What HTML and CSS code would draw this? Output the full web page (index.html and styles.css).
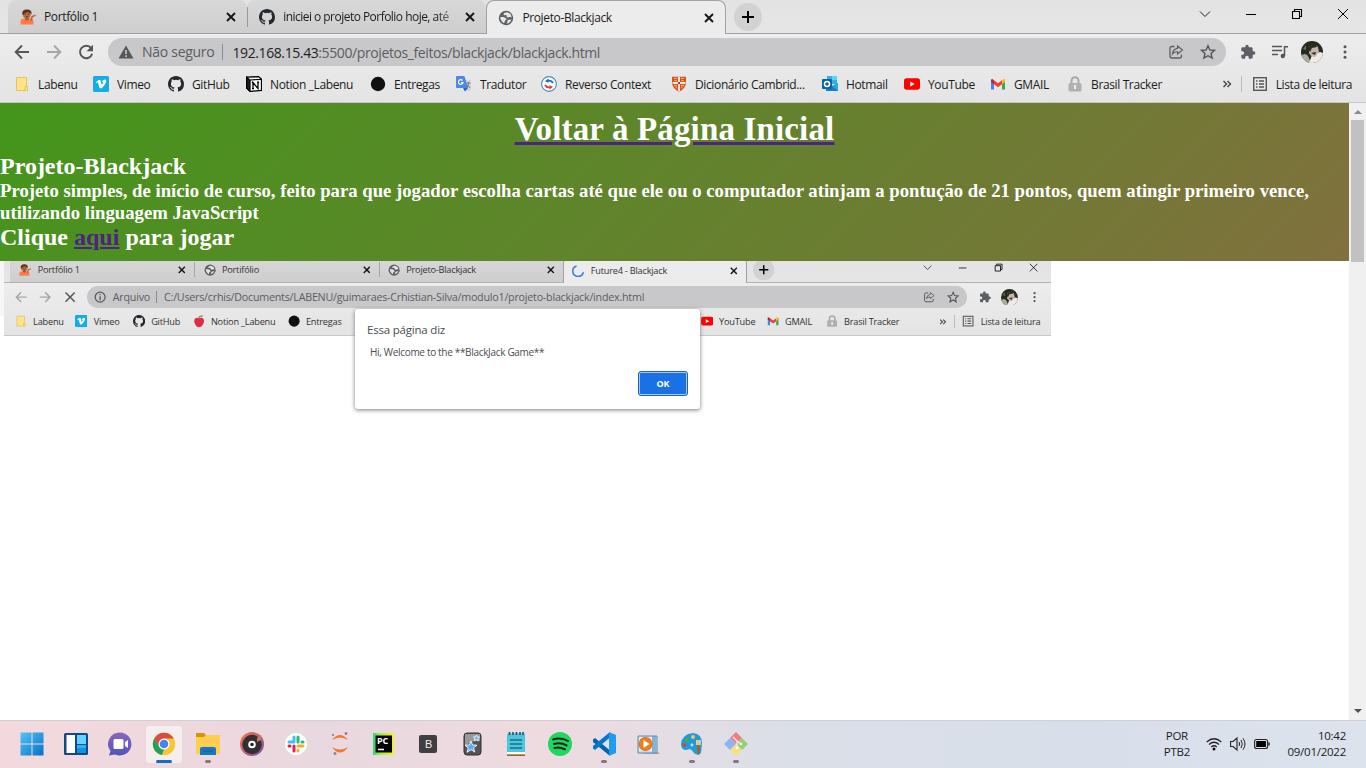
FILE: index.html
```html
<!DOCTYPE html>
<html lang="pt-BR">
<head>
<meta charset="utf-8">
<title>Projeto-Blackjack</title>
<link rel="stylesheet" href="styles.css">
</head>
<body>
<svg class="defs" width="0" height="0">
  <symbol id="person" viewBox="0 0 16 16"><path d="M.5 15.500v-3q0-3 4-3h5q4 0 4 3v3z" fill="#ff7c4a"/><path d="M10 11l1.500-4 4-1.500.3 1.200-3 1.500-1 4z" fill="#b9683c"/><path d="M5 8h4v2.500q-2 2-4 0z" fill="#a65c35"/><circle cx="6.800" cy="5.400" r="3.900" fill="#b96a40"/><path d="M2.300 5.500Q1.500 .5 7 .4q5.200.1 4.500 5Q10 4 8 3 5 3 3.200 6z" fill="#56331f"/><path d="M5 5.300h1M8 5.300h1M6 7.800h2" stroke="#412319" stroke-width=".8"/></symbol>
  <symbol id="github" viewBox="0 0 16 16"><path fill="#24292f" d="M8 0C3.580 0 0 3.580 0 8c0 3.540 2.290 6.530 5.470 7.590.4.070.55-.17.55-.38 0-.19-.010-.82-.010-1.490-2.010.37-2.530-.49-2.690-.94-.09-.23-.48-.94-.82-1.130-.28-.15-.68-.52-.010-.53.63-.010 1.080.58 1.230.82.72 1.210 1.870.87 2.330.66.070-.52.28-.87.510-1.070-1.780-.2-3.640-.89-3.640-3.950 0-.87.31-1.590.82-2.150-.08-.2-.36-1.020.08-2.120 0 0 .67-.21 2.200.82a7.500 7.500 0 0 1 4 0c1.530-1.040 2.200-.82 2.200-.82.44 1.100.16 1.920.08 2.120.51.56.82 1.270.82 2.150 0 3.070-1.870 3.750-3.650 3.950.29.25.54.73.54 1.480 0 1.070-.010 1.930-.010 2.200 0 .21.150.46.55.38A8 8 0 0 0 16 8c0-4.420-3.580-8-8-8z"/></symbol>
  <symbol id="globe" viewBox="0 0 16 16"><circle cx="8" cy="8" r="7.200" fill="#5c6063"/><path d="M8.500 2.300q-3.500.7-3 2.200.5 1 2 .5 1.500 0 1 1.500 1 1.500 3 .5 1.500-.5 2 1 .3-5-5-5.700zM2.300 7h3.500l2.500 1.500q1 1.500-1 1.800L6 13.300Q2.300 11 2.300 7zM8.500 13.500q4-.3 5-4l-2.500.3q-2 .5-1.500 1.700z" fill="#e5e5e5"/></symbol>
  <symbol id="close" viewBox="0 0 10 10"><path d="M1 1l8 8M9 1L1 9" stroke="#161616" stroke-width="1.900" fill="none"/></symbol>
  <symbol id="plus" viewBox="0 0 28 28"><circle cx="14" cy="14" r="14" fill="#d2d2d2"/><path d="M14 8v12M8 14h12" stroke="#000" stroke-width="2"/></symbol>
  <symbol id="win-min" viewBox="0 0 12 12"><path d="M1 6.500h10" stroke="#000" fill="none"/></symbol>
  <symbol id="win-chev" viewBox="0 0 12 12"><path d="M1 3.500l5 5 5-5" stroke="#222" fill="none"/></symbol>
  <symbol id="win-max" viewBox="0 0 12 12"><path d="M1.500 3.500h7v7h-7zM3.500 3V1.500h7v7H9" stroke="#000" stroke-width="1.100" fill="none"/></symbol>
  <symbol id="win-x" viewBox="0 0 12 12"><path d="M1 1l10 10M11 1L1 11" stroke="#000" fill="none"/></symbol>
  <symbol id="back" viewBox="0 0 16 16"><path d="M15 8H2M8 1.500L1.700 8 8 14.500" stroke="currentColor" stroke-width="1.900" fill="none"/></symbol>
  <symbol id="reload" viewBox="0 0 16 16"><path d="M13.200 4.200A6.200 6.200 0 1 0 14.200 9.800" stroke="#54575a" stroke-width="2" fill="none"/><path d="M15 .8v6.500H8.500z" fill="#54575a"/></symbol>
  <symbol id="stop" viewBox="0 0 16 16"><path d="M2 2l12 12M14 2L2 14" stroke="#54575a" stroke-width="2"/></symbol>
  <symbol id="warn" viewBox="0 0 16 16"><path d="M8 1.500L15.500 14.500H.5z" fill="#54575a"/><path d="M8 6v4M8 11.300v1.700" stroke="#c9c9cb" stroke-width="1.600"/></symbol>
  <symbol id="info" viewBox="0 0 16 16"><circle cx="8" cy="8" r="6.500" stroke="#54575a" stroke-width="1.600" fill="none"/><path d="M8 4v1.600M8 7v5" stroke="#54575a" stroke-width="1.600"/></symbol>
  <symbol id="share" viewBox="0 0 16 16"><path d="M6.500 2.500H4Q2 2.500 2 4.500v7.500q0 2 2 2h7.500q2 0 2-2v-1.500" stroke="#5b5e61" stroke-width="1.300" fill="none"/><path d="M9.500 2l5 4-5 4V7.800Q6.500 7.500 4.500 10 5 5 9.500 4.400z" stroke="#5b5e61" stroke-width="1.200" fill="none"/></symbol>
  <symbol id="star" viewBox="0 0 16 16"><path d="M8 1.700l1.900 4.300 4.700.4-3.600 3.100 1.100 4.600L8 11.700l-4.100 2.400L5 9.500 1.400 6.400 6.100 6z" stroke="#54575a" stroke-width="1.400" fill="none"/></symbol>
  <symbol id="puzzle" viewBox="0 0 24 24"><path fill="#5c5f63" d="M20.500 11H19V7c0-1.100-.9-2-2-2h-4V3.500a2.500 2.500 0 0 0-5 0V5H4c-1.100 0-2 .9-2 2v3.800h1.500c1.500 0 2.700 1.200 2.700 2.700S5 16.200 3.500 16.200H2V20c0 1.100.9 2 2 2h3.800v-1.500c0-1.500 1.200-2.700 2.700-2.700s2.700 1.200 2.700 2.700V22H17c1.100 0 2-.9 2-2v-4h1.500a2.500 2.500 0 0 0 0-5z"/></symbol>
  <symbol id="playlist" viewBox="0 0 16 16"><path d="M0 2.500h10M0 6.500h10M0 10.500h6M12.500 12V2.800H16" stroke="#54575a" stroke-width="1.500" fill="none"/><circle cx="10.800" cy="12" r="2.200" fill="#54575a"/></symbol>
  <symbol id="avatar" viewBox="0 0 22 22"><defs><clipPath id="face"><circle cx="11" cy="11" r="11"/></clipPath></defs><g clip-path="url(#face)"><path d="M0 0h22v22H0z" fill="#252b20"/><path d="M0 15q4-4 7 0l3 7H0z" fill="#aaaa9d"/><path d="M8 22l3-8 8-3 3 1v10z" fill="#f0e9e8"/><path d="M8 6q5-4 9 0l1 5-4 5q-4 0-6-4z" fill="#c4b5a8"/><path d="M7 8q2-5 8-4l1 2-5 1-2 4zM10 12l5-1-1 3z" fill="#302a25"/><path d="M2 8l3-4v5z" fill="#66715d"/></g></symbol>
  <symbol id="dots" viewBox="0 0 4 16"><g fill="#54575a"><circle cx="2" cy="2.800" r="1.500"/><circle cx="2" cy="8" r="1.500"/><circle cx="2" cy="13.200" r="1.500"/></g></symbol>
  <symbol id="folder" viewBox="0 0 16 16"><path d="M2.500 1.500h10v9h1v4h-11z" fill="#ffe28a" stroke="#e4c45a"/><path d="M11 14v-3.500h2" stroke="#e4c45a" fill="none"/></symbol>
  <symbol id="vimeo" viewBox="0 0 16 16"><rect width="16" height="16" rx="1.500" fill="#13aeea"/><path d="M3 6l3-2.300Q7.500 3.500 8 6l.8 3q1.500-1.500 1.200-2.700-.2-.8-1.200-.3Q9.700 3.400 12 3.500q1.800.2 1 2.700-.8 2.500-4 5.800-2 1.300-2.800-1L5 6.600 3.600 7z" fill="#fff"/></symbol>
  <symbol id="notion" viewBox="0 0 16 16"><path d="M.7 1.200L12.500.6l3 2.500v11.400L4 15.400.7 12z" fill="#fff" stroke="#000" stroke-width="1.300"/><path d="M.7 1.200L4 4.300v11L.7 12zM4 4l11-.7" fill="#222" stroke="#000" stroke-width="1.200"/><path d="M7 12.500v-6l5 6v-6.200M5.800 6.500H7M6 12.700h2M11 6.200h2" stroke="#000" stroke-width="1.300" fill="none"/></symbol>
  <symbol id="apple" viewBox="0 0 16 16"><path d="M8 4.500Q11 2.500 13.500 5q2 3-.5 7.500Q10 17 8 15.500 5.500 17 3 12.500.5 8 2.500 5 5 2.500 8 4.500z" fill="#e02d43"/><path d="M7.500 5Q8 2 9 1" stroke="#75412d" fill="none"/><path d="M9 3q0-3 4-2.500Q12 3.500 9 3z" fill="#6a9e38"/></symbol>
  <symbol id="dot" viewBox="0 0 16 16"><circle cx="8" cy="8" r="7.200" fill="#111"/></symbol>
  <symbol id="translate" viewBox="0 0 16 16"><path d="M5 4h9q1 0 1 1v9q0 1-1 1H9z" fill="#d3d5d8"/><path d="M1 0h6.500q1 0 1.300 1L12 12H1q-1 0-1-1V1q0-1 1-1z" fill="#4c87ec"/><path d="M7 12h5l-3 3.500z" fill="#2c61c4"/><path d="M6.500 4.500a2.300 2.300 0 1 0 .5 2H5" stroke="#fff" stroke-width="1.200" fill="none"/><path d="M10.500 7h4M12.500 6v1q0 3-2 5M11 8.500l3 3.500" stroke="#6b7d8c" fill="none"/></symbol>
  <symbol id="reverso" viewBox="0 0 16 16"><circle cx="8" cy="8" r="7.400" fill="#fff" stroke="#488cba" stroke-width="1.100"/><path d="M12 7Q10.500 4.200 7 4.700" stroke="#0b72b5" stroke-width="1.800" fill="none"/><path d="M4 5.200L7.500 2.500v4.300z" fill="#0b72b5"/><path d="M4 9Q5.500 11.800 9 11.300" stroke="#e8373b" stroke-width="1.800" fill="none"/><path d="M12 10.800L8.500 9.200v4.300z" fill="#e8373b"/></symbol>
  <symbol id="shield" viewBox="0 0 16 16"><path d="M1 .8h14v7Q14 13 8 15.800 2 13 1 7.800z" fill="#d0552c"/><path d="M8 1v14.200M1.500 7h13" stroke="#f5e6dc" stroke-width="1.900"/><path d="M3 2.500h3M10 2.500h3M3 4.800h3M10 4.800h3M3 9.600h3M10 9.600h3M4.500 11.800H6M10 11.800h1.500" stroke="#f1b44c" stroke-width="1.100"/><path d="M7 6h2v2H7z" fill="#a8402b"/></symbol>
  <symbol id="outlook" viewBox="0 0 16 16"><path d="M5 0h10v8H5z" fill="#35aee9"/><path d="M10 0h5v4h-5z" fill="#50d9ff"/><path d="M4 7l6 3 6-3v8H4z" fill="#147ec6"/><path d="M10 10l6-3v8z" fill="#28a8ea"/><rect y="3" width="10" height="10" rx="1" fill="#0862ad"/><circle cx="5" cy="8" r="2.500" stroke="#fff" stroke-width="1.500" fill="none"/></symbol>
  <symbol id="youtube" viewBox="0 0 16 16"><rect y="2.300" width="16" height="11.400" rx="2.600" fill="#f00"/><path d="M6.300 5.400v5.200L10.800 8z" fill="#fff"/></symbol>
  <symbol id="gmail" viewBox="0 0 16 16"><path d="M1 4v9.500h3V7z" fill="#4285f4"/><path d="M12 7v6.500h3V4z" fill="#34a853"/><path d="M1 3.500V6l3 2.300V4.500L2.500 3z" fill="#c5221f"/><path d="M4 4.300L8 7.300l4-3v4L8 11.200l-4-3z" fill="#ea4335"/><path d="M12 4.300L13.500 3q1.500 0 1.500 1.300V6l-3 2.300z" fill="#fbbc04"/></symbol>
  <symbol id="lock" viewBox="0 0 16 16"><path d="M4.500 8V4.800a3.500 3.500 0 0 1 7 0V8" stroke="#aaa" stroke-width="2" fill="none"/><rect x="1.500" y="7" width="13" height="8.500" rx="1.500" fill="#b0b0b0"/><path d="M8 9v4" stroke="#eee" stroke-width="2"/></symbol>
  <symbol id="more" viewBox="0 0 10 10"><path d="M1.500 2l3 3-3 3M5.500 2l3 3-3 3" stroke="#4b4d50" stroke-width="1.500" fill="none"/></symbol>
  <symbol id="list" viewBox="0 0 16 16"><rect x="1.700" y="1.700" width="12.600" height="12.600" stroke="#54575a" stroke-width="1.400" fill="none"/><path d="M4 5h1.500M7 5h5M4 8h1.500M7 8h5M4 11h1.500M7 11h5" stroke="#54575a" stroke-width="1.400"/></symbol>
  <symbol id="spinner" viewBox="0 0 16 16"><path d="M6 1.200A7 7 0 1 0 14.800 9.500" stroke="#3d7de3" stroke-width="2" fill="none"/></symbol>
</svg>

<div class="desktop">
  <header class="chrome">
    <div class="tabs">
      <div class="tab"><svg class="i16"><use href="#person"/></svg><span>Portfólio 1</span><svg class="x"><use href="#close"/></svg></div>
      <div class="tab split"><svg class="i16"><use href="#github"/></svg><span class="fade">iniciei o projeto Porfolio hoje, até</span><svg class="x"><use href="#close"/></svg></div>
      <div class="tab active"><svg class="i16"><use href="#globe"/></svg><span>Projeto-Blackjack</span><svg class="x"><use href="#close"/></svg></div>
      <svg class="plus"><use href="#plus"/></svg>
      <div class="controls"><svg><use href="#win-chev"/></svg><svg><use href="#win-min"/></svg><svg><use href="#win-max"/></svg><svg><use href="#win-x"/></svg></div>
    </div>
    <div class="toolbar">
      <svg class="nav"><use href="#back"/></svg><svg class="nav forward"><use href="#back"/></svg><svg class="nav"><use href="#reload"/></svg>
      <div class="omnibox"><svg class="i16"><use href="#warn"/></svg><span class="security">Não seguro</span><span class="url"><b>192.168.15.43</b>:5500/projetos_feitos/blackjack/blackjack.html</span><svg class="i16 share"><use href="#share"/></svg><svg class="i16"><use href="#star"/></svg></div>
      <svg class="i16 ext"><use href="#puzzle"/></svg><svg class="i16 playlist"><use href="#playlist"/></svg><svg class="avatar"><use href="#avatar"/></svg><svg class="dots"><use href="#dots"/></svg>
    </div>
    <nav class="bookmarks">
      <a class="w79"><svg><use href="#folder"/></svg>Labenu</a><a class="w75"><svg><use href="#vimeo"/></svg>Vimeo</a><a class="w78"><svg><use href="#github"/></svg>GitHub</a><a class="w124"><svg><use href="#notion"/></svg>Notion _Labenu</a><a class="w86"><svg><use href="#dot"/></svg>Entregas</a><a class="w85"><svg><use href="#translate"/></svg>Tradutor</a><a class="w130"><svg><use href="#reverso"/></svg>Reverso Context</a><a class="w151"><svg><use href="#shield"/></svg>Dicionário Cambrid...</a><a class="w82"><svg><use href="#outlook"/></svg>Hotmail</a><a class="w86"><svg><use href="#youtube"/></svg>YouTube</a><a class="w77"><svg><use href="#gmail"/></svg>GMAIL</a><a><svg><use href="#lock"/></svg>Brasil Tracker</a>
      <svg class="more"><use href="#more"/></svg><a class="reading"><svg><use href="#list"/></svg>Lista de leitura</a>
    </nav>
  </header>

  <div class="viewport">
    <main class="page">
      <section class="intro">
        <h1><a>Voltar à Página Inicial</a></h1>
        <h2>Projeto-Blackjack</h2>
        <h3>Projeto simples, de início de curso, feito para que jogador escolha cartas até que ele ou o computador atinjam a pontução de 21 pontos, quem atingir primeiro vence, utilizando linguagem JavaScript</h3>
        <h2>Clique <a>aqui</a> para jogar</h2>
      </section>
      <section class="preview">
        <div class="chrome mini">
          <div class="tabs">
            <div class="tab"><svg class="i16"><use href="#person"/></svg><span>Portfólio 1</span><svg class="x"><use href="#close"/></svg></div>
            <div class="tab split"><svg class="i16"><use href="#globe"/></svg><span>Portifólio</span><svg class="x"><use href="#close"/></svg></div>
            <div class="tab split"><svg class="i16"><use href="#globe"/></svg><span>Projeto-Blackjack</span><svg class="x"><use href="#close"/></svg></div>
            <div class="tab active"><svg class="i16"><use href="#spinner"/></svg><span>Future4 - Blackjack</span><svg class="x"><use href="#close"/></svg></div>
            <svg class="plus"><use href="#plus"/></svg>
            <div class="controls"><svg><use href="#win-chev"/></svg><svg><use href="#win-min"/></svg><svg><use href="#win-max"/></svg><svg><use href="#win-x"/></svg></div>
          </div>
          <div class="toolbar">
            <svg class="nav forward"><use href="#back"/></svg><svg class="nav forward flip"><use href="#back"/></svg><svg class="nav"><use href="#stop"/></svg>
            <div class="omnibox"><svg class="i16"><use href="#info"/></svg><span class="security">Arquivo</span><span class="url">C:/Users/crhis/Documents/LABENU/guimaraes-Crhistian-Silva/modulo1/projeto-blackjack/index.html</span><svg class="i16 share"><use href="#share"/></svg><svg class="i16"><use href="#star"/></svg></div>
            <svg class="i16 ext"><use href="#puzzle"/></svg><svg class="avatar"><use href="#avatar"/></svg><svg class="dots"><use href="#dots"/></svg>
          </div>
          <nav class="bookmarks">
            <a class="w79"><svg><use href="#folder"/></svg>Labenu</a><a class="w75"><svg><use href="#vimeo"/></svg>Vimeo</a><a class="w78"><svg><use href="#github"/></svg>GitHub</a><a class="w124"><svg><use href="#apple"/></svg>Notion _Labenu</a><a class="behind"><svg><use href="#dot"/></svg>Entregas</a><a class="w86"><svg><use href="#youtube"/></svg>YouTube</a><a class="w77"><svg><use href="#gmail"/></svg>GMAIL</a><a><svg><use href="#lock"/></svg>Brasil Tracker</a>
            <svg class="more"><use href="#more"/></svg><a class="reading"><svg><use href="#list"/></svg>Lista de leitura</a>
          </nav>
        </div>
        <div class="dialog"><p class="dialog-title">Essa página diz</p><p class="dialog-text">Hi, Welcome to the **BlackJack Game**</p><button>OK</button></div>
      </section>
    </main>
    <aside class="scrollbar"><i class="up"></i><i class="thumb"></i><i class="down"></i></aside>
  </div>

  <footer class="taskbar">
    <div class="apps">
      <div class="app"><svg viewBox="0 0 24 24"><defs><linearGradient id="wb" x2="1" y2="1"><stop stop-color="#4fc5f4"/><stop offset="1" stop-color="#0870c8"/></linearGradient></defs><path d="M.5.500h11v11H.5zM12.500.500h11v11h-11zM.5 12.500h11v11H.5zM12.500 12.500h11v11h-11z" fill="url(#wb)"/></svg></div>
      <div class="app"><svg viewBox="0 0 24 24"><rect y="1" width="24" height="22" rx="1.500" fill="#124a86"/><path d="M2.500 3h8.500v18H2.500z" fill="#fff"/><path d="M13 3h9v9h-9z" fill="#62d4ff"/><path d="M13 13h9v8h-9z" fill="#0e94df"/><path d="M13 13h9v3h-9z" fill="#2ab4f4"/></svg></div>
      <div class="app"><svg viewBox="0 0 24 24"><defs><linearGradient id="ch" x2="0" y2="1"><stop stop-color="#8b65ba"/><stop offset="1" stop-color="#4f55bf"/></linearGradient></defs><path d="M12 .5a11.500 11.500 0 1 1-5 21.900L1 23.500 2.500 19A11.500 11.500 0 0 1 12 .500z" fill="url(#ch)"/><rect x="5.500" y="7" width="10" height="10" rx="1.500" fill="#fff"/><path d="M17 10l3-2v8l-3-2z" fill="#fff"/></svg></div>
      <div class="app selected run"><svg viewBox="0 0 24 24"><circle cx="12" cy="12" r="11.200" fill="#f6c735"/><path d="M2.300 6.400A11.200 11.200 0 0 1 21.700 6.400H12L7.200 15z" fill="#d84b3f"/><path d="M2.300 6.400L7.300 15 12 17.500l-2.200 5.500A11.200 11.200 0 0 1 2.300 6.400z" fill="#2a9e59"/><circle cx="12" cy="12" r="5.500" fill="#fff"/><circle cx="12" cy="12" r="4.300" fill="#4485f2"/></svg></div>
      <div class="app run"><svg viewBox="0 0 24 24"><path d="M0 2q0-1 1-1h7l2 2-2 3H0z" fill="#d69408"/><path d="M0 5h8l2-2h13q1 0 1 1v17q0 1-1 1H1q-1 0-1-1z" fill="#fdcf4d"/><path d="M4 23v-6q0-2 2-2h12q2 0 2 2v6z" fill="#1678c5"/><path d="M7 19h10" stroke="#0c5a9c"/></svg></div>
      <div class="app"><svg viewBox="0 0 24 24"><defs><linearGradient id="mu" x2="1" y2="1"><stop stop-color="#f37945"/><stop offset="1" stop-color="#7550a3"/></linearGradient></defs><circle cx="12" cy="12" r="12" fill="url(#mu)"/><circle cx="12" cy="12.500" r="9.700" fill="#333034"/><circle cx="12" cy="12.500" r="2.800" fill="#222" stroke="#fff" stroke-width="2"/><path d="M17 6l4-3v5l-4 2z" fill="#d17468"/></svg></div>
      <div class="app"><svg viewBox="0 0 24 24"><circle cx="12" cy="12" r="11.500" fill="#fff" stroke="#ddd"/><g fill="none" stroke-linecap="round" stroke-width="3"><path d="M10 5v4M5 10h5" stroke="#36c5f0"/><path d="M14 5v5M19 10h-1" stroke="#2eb67d"/><path d="M14 14h5M14 18v1" stroke="#ecb22e"/><path d="M10 14v5M5 14h1" stroke="#e01e5a"/></g></svg></div>
      <div class="app"><svg viewBox="0 0 24 24"><path d="M4 8Q12-2 20 8 12 3 4 8zM4 15q8 5 16 0-8 11-16 0z" fill="#f37726"/><circle cx="5" cy="3" r="1" fill="#777"/><circle cx="18" cy="1.500" r="1.300" fill="#777"/><circle cx="7" cy="21.500" r="1.500" fill="#888"/></svg></div>
      <div class="app"><svg viewBox="0 0 24 24"><defs><linearGradient id="py"><stop stop-color="#21d789"/><stop offset=".3" stop-color="#a6ec3c"/><stop offset="1" stop-color="#f3f233"/></linearGradient></defs><path d="M1 1h21v22H1z" fill="url(#py)"/><path d="M3.500 3.500H20v17H3.500z" fill="#050505"/><path d="M6 17.500h6" stroke="#fff" stroke-width="1.500"/><text x="5" y="12" class="pc">PC</text></svg></div>
      <div class="app"><svg viewBox="0 0 24 24"><rect x="3" y="3" width="18" height="18" rx="2" fill="#403f40"/><text x="9" y="16" class="letter">B</text></svg></div>
      <div class="app"><svg viewBox="0 0 24 24"><rect x="4" y="1" width="17" height="22" rx="3" fill="#555" stroke="#333"/><path d="M5 2h15v7Q12 8 5 14z" fill="#999"/><path d="M11 9l1.600 4 4.400.2-3.500 2.600 1.300 4.200-3.700-2.300L7 20.200l1.300-4.300L5 13.200l4.300-.2zM16.500 3l.8 2 2.200.200-1.700 1.500.5 2.200-1.900-1.200-2 1.100.6-2.200-1.700-1.500 2.300-.1z" fill="#5eaaf0" stroke="#e7f6ff"/></svg></div>
      <div class="app"><svg viewBox="0 0 24 24"><rect x="3" y="1.500" width="18" height="21" rx="1" fill="#4fc5dc"/><path d="M3 20h18v2.500H3z" fill="#fff"/><path d="M3 23.200h18" stroke="#9c5a13" stroke-width="1.500"/><path d="M6 8h12M6 12h12M6 16h12" stroke="#117296" stroke-width="1.500"/><path d="M5.500 0v3M9 0v3M12.500 0v3M16 0v3M19 0v3" stroke="#075775" stroke-width="1.600"/></svg></div>
      <div class="app"><svg viewBox="0 0 24 24"><circle cx="12" cy="12" r="12" fill="#1ed760"/><path d="M5 7.500q8-2.500 15 1.500M6 12q6.500-2 12.500 1.400M6.500 16q5-1.500 10.500 1.300" stroke="#142119" stroke-width="2" stroke-linecap="round" fill="none"/></svg></div>
      <div class="app run"><svg viewBox="0 0 24 24"><path d="M1 7.500L3 6l15 12.500V24L1 10z" fill="#0065a9"/><path d="M1 16.500L3 18 18 5.500V0L1 14z" fill="#007acc"/><path d="M17 0l7 3v18l-7 3z" fill="#1f9cf0"/></svg></div>
      <div class="app"><svg viewBox="0 0 24 24"><path d="M4 22h20l-3-3z" fill="#aaa"/><path d="M2 4h19v17H2z" fill="#b9dff1" stroke="#608baf"/><path d="M17 4v17M19 4v17" stroke="#518bba"/><rect x="3" y="5" width="13" height="14" fill="#e7edf0"/><circle cx="9.500" cy="12" r="6.700" fill="#f07f1b" stroke="#b85416" stroke-width=".5"/><path d="M7.500 8v8l6-4z" fill="#fff"/></svg></div>
      <div class="app run"><svg viewBox="0 0 24 24"><path d="M1 12Q2 2 13 1q9 1 9 10l-1 10q-4 3-7 0-2-3-4-4-3 1-5 1-4-1-4-6z" fill="#239bd7"/><circle cx="7" cy="8" r="2" fill="#48ab4e"/><circle cx="13" cy="5" r="2" fill="#fac548"/><circle cx="4.500" cy="13" r="2" fill="#c35036"/><circle cx="12" cy="13" r="1.400" fill="#bce7fb"/><path d="M16 8h5v5h-5z" fill="#dbc7a0"/><path d="M17 13h3l-.5 9q-1 2-2 0z" fill="#aa641c"/></svg></div>
      <div class="app run"><svg viewBox="0 0 24 24"><path d="M12 0l6 6-6 6-6-6z" fill="#ef7d83"/><path d="M18 6l6 6-6 6-6-6z" fill="#94cf79"/><path d="M6 6l6 6-6 6-6-6z" fill="#8fb4f4"/><path d="M12 12l6 6-6 6-6-6z" fill="#f8df7c"/><path d="M9 5l4 4v8M13 9l4 3" stroke="#f8f0f0" stroke-width="1.200" fill="none"/><circle cx="13" cy="16" r="1.300" fill="#fff"/><circle cx="17" cy="12" r="1.300" fill="#fff"/></svg></div>
    </div>
    <div class="lang">POR<br>PTB2</div>
    <div class="status">
      <svg viewBox="0 0 16 16"><path d="M.7 6Q8-.5 15.300 6M3 8.500q5-4.500 10 0M5.200 11q2.800-2.500 5.600 0" stroke="#222" stroke-width="1.200" fill="none"/><circle cx="8" cy="13" r="1.500" fill="#111"/></svg>
      <svg viewBox="0 0 16 16"><path d="M.6 5.500h2.500L7 2v12l-3.900-3.500H.6z" stroke="#222" stroke-width="1.100" fill="none"/><path d="M9 6q1.300 2 0 4M11 4q2.500 4 0 8M13 2.300q4 5.700 0 11.400" stroke="#222" fill="none"/></svg>
      <svg viewBox="0 0 16 16"><rect x=".6" y="3.500" width="13" height="9" rx="2" stroke="#222" stroke-width="1.100" fill="none"/><rect x="2.200" y="5" width="9.800" height="6" rx=".5"/><path d="M15 6.500v3" stroke="#222" stroke-width="1.500"/></svg>
    </div>
    <div class="clock">10:42<br>09/01/2022</div>
  </footer>
</div>
</body>
</html>
```
FILE: styles.css
```css
* { box-sizing: border-box; }
body { margin: 0; overflow: hidden; background: #fff; }
h1, h2, h3, p { margin: 0; }
svg { display: block; flex: none; }
.defs { position: absolute; }
.desktop { width: 1366px; height: 768px; display: flex; flex-direction: column; }

.chrome { flex: none; height: 103px; width: 1366px; font: 12px "Open Sans", "Noto Sans", sans-serif; letter-spacing: -.37px; color: #1c1c1c; background: #e8e8e8; border-bottom: 1px solid #c8c8c8; white-space: nowrap; }
.i16 { width: 16px; height: 16px; }
.tabs { height: 34px; display: flex; background: linear-gradient(#e3e3e3, #e6e6e6); box-shadow: inset 0 -1px #a3a0a3; padding-left: 8px; }
.tab { width: 239.200px; height: 33px; padding: 0 11px 0 12px; display: flex; align-items: center; gap: 8px; background: linear-gradient(#d8d8d8, #cecece); border-radius: 8px 8px 0 0; }
.tab span { flex: 1; white-space: nowrap; }
.tab .x { width: 10px; height: 10px; }
.split { background: linear-gradient(#999, #999) left center / 1px 20px no-repeat, linear-gradient(#d8d8d8, #cecece); }
.tab .fade { letter-spacing: -.53px; -webkit-mask-image: linear-gradient(90deg, #000 88%, rgba(0, 0, 0, .3)); }
.active { height: 34px; background: #ececec; border: 1px solid #a3a0a3; border-bottom: 0; padding-left: 11px; }
.plus { width: 28px; height: 28px; margin: 3px 0 0 8px; }
.controls { margin-left: auto; display: flex; gap: 34px; padding: 8px 17px 0 0; }
.controls svg { width: 12px; height: 12px; }
.toolbar { height: 36px; display: flex; align-items: center; padding: 0 19px 0 14px; background: linear-gradient(#ededed, #e8e8e8); }
.nav { width: 16px; height: 16px; margin-right: 16px; color: #54575a; }
.forward { color: #a6a6a6; transform: scaleX(-1); }
.mini .nav.forward { transform: none; }
.mini .nav.flip { transform: scaleX(-1); }
.omnibox { width: 1118px; height: 28px; margin-left: -2px; border-radius: 14px; background: #c8c8ca; display: flex; align-items: center; padding: 0 10px; font-size: 14px; letter-spacing: -.4px; color: #5b5d60; }
.security { margin-left: 8px; padding-right: 8px; margin-right: 9px; border-right: 1px solid #8b8b8d; line-height: 16px; letter-spacing: -.28px; }
.url { flex: 1; }
.url b { font-weight: 400; color: #202124; }
.share { margin-right: 16px; }
.ext { margin-left: 14px; }
.playlist { margin-left: 16px; }
.avatar { width: 22px; height: 22px; margin-left: 13px; }
.dots { width: 4px; height: 16px; margin-left: auto; }
.bookmarks { height: 32px; display: flex; align-items: center; padding: 0 14px 4px 14px; background: linear-gradient(#e8e8e8, #e4e4e4); }
.bookmarks a { display: flex; align-items: center; gap: 8px; flex: none; }
.bookmarks a svg { width: 16px; height: 16px; }
.bookmarks .more { width: 10px; height: 10px; margin-left: auto; margin-right: 9px; }
.reading { border-left: 1px solid #bbb; padding-left: 10px; height: 16px; }
.w75 { width: 75px; } .w77 { width: 77px; } .w78 { width: 78px; } .w79 { width: 79px; } .w82 { width: 82px; } .w85 { width: 85px; } .w86 { width: 86px; } .w124 { width: 124px; } .w130 { width: 130px; } .w151 { width: 151px; }

.viewport { flex: 1; min-height: 0; display: flex; }
.page { width: 1349px; background: #fff; }
.intro { height: 158px; padding-top: 7px; color: #fff; background: linear-gradient(135deg, #43961b, #81703e); font-family: "Liberation Serif", serif; }
.intro a { text-decoration: underline; color: #4c2382; }
.intro h1 { height: 43px; line-height: 39px; font-size: 33px; letter-spacing: .15px; text-align: center; }
.intro h1 a { color: #fff; text-decoration-color: #4c2382; text-decoration-thickness: 3px; text-underline-offset: 2px; }
.intro h2 { font-size: 24px; line-height: 27px; }
.intro h3 { font-size: 18.720px; line-height: 22px; }
.preview { position: relative; height: 459px; overflow: hidden; padding-left: 4px; background: linear-gradient(#f6f6f6, #f6f6f6) 0 0 / 4px 55px no-repeat; }
.mini { zoom: .7665; margin-top: -5px; letter-spacing: -.28px; color: #333; }
.mini .tab { width: 240.400px; }
.mini .ext { margin-left: 15px; }
.mini .omnibox { width: 1149px; letter-spacing: -.3px; }
.mini .behind { width: 539px; }
.dialog { position: absolute; left: 355px; top: 48px; width: 345px; height: 100px; background: #fff; border-radius: 3px; box-shadow: 0 1px 4px #777; font-family: "Open Sans", sans-serif; color: #4b4d50; padding: 12px 12px; display: flex; flex-direction: column; }
.dialog-title { font-size: 11.500px; line-height: 17px; letter-spacing: -.2px; }
.dialog-text { font-size: 10px; line-height: 16px; margin: 6px 0 0 3px; letter-spacing: -.32px; }
.dialog button { align-self: flex-end; margin-top: 11px; width: 50px; height: 25px; flex: none; border: 1px solid #1a64cb; outline: 1px solid #a9c9f7; outline-offset: -2px; border-radius: 3px; background: #1a70e5; color: #fff; font: bold 9px "Open Sans", sans-serif; padding: 0; }
.scrollbar { width: 17px; background: #f0f0f0; display: flex; flex-direction: column; align-items: center; }
.up, .down { border: 4px solid transparent; border-top: 0; border-bottom: 4px solid #8b8b8b; margin-top: 7px; }
.thumb { width: 13px; height: 142px; margin-top: 6px; background: #c1c1c1; }
.down { border-bottom: 0; border-top: 4px solid #505050; margin: auto 0 7px; }

.taskbar { height: 48px; flex: none; display: flex; align-items: center; background: linear-gradient(90deg, #f3d9dd, #e9d8df 24%, #eedbe0 40%, #dadfe8 58%, #d9dfea 80%, #dce3ed); border-top: 1px solid #d2cfd6; font: 11.500px "Open Sans", sans-serif; letter-spacing: -.25px; line-height: 16px; color: #1b1b1b; padding: 0 20px 2px 0; }
.apps { display: flex; padding-left: 10px; }
.app { position: relative; width: 44px; height: 48px; display: grid; place-items: center; }
.app svg { position: relative; width: 24px; height: 24px; }
.selected::before { content: ""; position: absolute; inset: 5px 3px 4px; background: #f6edef; border: 1px solid #e6dadd; border-radius: 4px; }
.run::after { content: ""; position: absolute; bottom: 5px; left: 19px; width: 6px; height: 3px; border-radius: 2px; background: #85797e; }
.selected::after { left: 14px; width: 16px; background: #0f70bd; }
.pc { font: bold 9px "Open Sans", sans-serif; fill: #fff; }
.letter { font: 11px "Liberation Sans", sans-serif; fill: #eee; }
.lang { margin-left: auto; text-align: center; }
.status { display: flex; gap: 8px; margin-left: 16px; }
.status svg { width: 16px; height: 16px; }
.clock { text-align: right; width: 76px; }
```
